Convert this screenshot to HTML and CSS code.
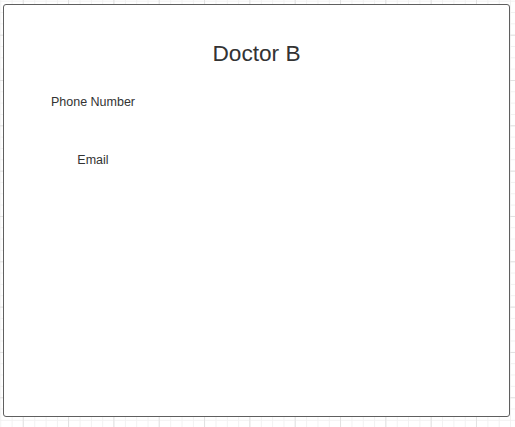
FILE: index.html
```html
<!DOCTYPE html>
<html>
<head>
<meta charset="utf-8">
<link rel="stylesheet" href="styles.css">
</head>
<body>
<div class="card">
  <h1 class="title">Doctor B</h1>
  <div class="fields">
    <div class="label">Phone Number</div>
    <div class="label">Email</div>
  </div>
</div>
</body>
</html>
```
FILE: styles.css
```css
html, body {
  margin: 0;
  padding: 0;
}
body {
  width: 515px;
  height: 427px;
  overflow: hidden;
  background-color: #ffffff;
  background-image:
    linear-gradient(to right, #e2e2e2 1px, transparent 1px),
    linear-gradient(to bottom, #e2e2e2 1px, transparent 1px),
    linear-gradient(to right, #f1f1f1 1px, transparent 1px),
    linear-gradient(to bottom, #f1f1f1 1px, transparent 1px);
  background-size: 45.33px 45.33px, 45.33px 45.33px, 11.333px 11.333px, 11.333px 11.333px;
  background-position: 22.7px 0, 0 34.7px, 0.3px 0, 0 0.7px;
  font-family: "Liberation Sans", Arial, sans-serif;
  color: #333333;
  padding-top: 4px;
  padding-left: 3px;
  box-sizing: border-box;
}
.card {
  width: 507px;
  height: 413px;
  box-sizing: border-box;
  background: #ffffff;
  border: 1px solid #5f5f5f;
  border-radius: 3px;
  padding-top: 35px;
}
.title {
  margin: 0;
  font-size: 22.67px;
  font-weight: normal;
  line-height: 26px;
  text-align: center;
}
.fields {
  display: flex;
  flex-direction: column;
  width: 120px;
  margin-left: 29px;
  margin-top: 29px;
  gap: 43px;
}
.label {
  font-size: 12.5px;
  line-height: 15px;
  text-align: center;
}
```
